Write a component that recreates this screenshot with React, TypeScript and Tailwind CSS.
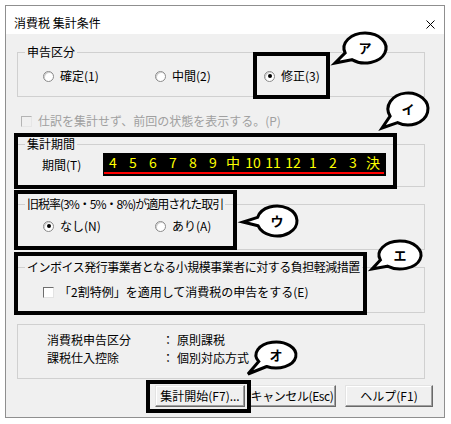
import React from "react";

const months = ["4", "5", "6", "7", "8", "9", "中", "10", "11", "12", "1", "2", "3", "決"];

function Radio({ checked }: { checked?: boolean }) {
  return (
    <span className="flex h-[11px] w-[11px] shrink-0 items-center justify-center rounded-full border border-[#8a8a8a] bg-white shadow-[inset_1px_1px_0_#d0d0d0]">
      {checked && <span className="h-[4px] w-[4px] rounded-full bg-black" />}
    </span>
  );
}

function Check({ disabled }: { disabled?: boolean }) {
  return (
    <span
      className={
        disabled
          ? "block h-[11px] w-[11px] shrink-0 border border-t-[#b4b4b4] border-l-[#b4b4b4] border-r-[#e6e6e6] border-b-[#e6e6e6] bg-[#f0f0f0]"
          : "block h-[11px] w-[11px] shrink-0 border border-t-[#6e6e6e] border-l-[#6e6e6e] border-r-[#e3e3e3] border-b-[#e3e3e3] bg-white"
      }
    />
  );
}

function Option({ label, checked, w }: { label: string; checked?: boolean; w: string }) {
  return (
    <label className={`flex h-[16px] items-center gap-[6px] leading-[16px] ${w}`}>
      <Radio checked={checked} />
      <span>{label}</span>
    </label>
  );
}

function Group({
  title,
  className,
  legendClass,
  children,
}: {
  title: string;
  className?: string;
  legendClass?: string;
  children: React.ReactNode;
}) {
  return (
    <fieldset className={`w-[408px] border border-[#d0d0d0] ${className ?? ""}`}>
      <legend className={`ml-[7px] px-[2px] leading-[16px] ${legendClass ?? ""}`}>{title}</legend>
      {children}
    </fieldset>
  );
}

function Button({ label, w }: { label: string; w: string }) {
  return (
    <button
      className={`flex h-[22px] items-center justify-center whitespace-nowrap border border-t-[#e3e3e3] border-l-[#e3e3e3] border-r-[#696969] border-b-[#696969] bg-[#f0f0f0] leading-[16px] shadow-[inset_-1px_-1px_0_#a0a0a0,inset_1px_1px_0_#ffffff] ${w}`}
    >
      {label}
    </button>
  );
}

function Bubble({
  cx,
  cy,
  rx,
  ry,
  tx,
  ty,
  label,
}: {
  cx: number;
  cy: number;
  rx: number;
  ry: number;
  tx: number;
  ty: number;
  label: string;
}) {
  const t = Math.atan2((ty - cy) / ry, (tx - cx) / rx);
  const d = 0.28;
  const ax = cx + rx * Math.cos(t - d);
  const ay = cy + ry * Math.sin(t - d);
  const bx = cx + rx * Math.cos(t + d);
  const by = cy + ry * Math.sin(t + d);
  const path = `M${ax},${ay} L${tx},${ty} L${bx},${by} A${rx},${ry} 0 1 1 ${ax},${ay} Z`;
  return (
    <g>
      <path d={path} fill="white" stroke="black" strokeWidth={3} strokeLinejoin="miter" />
      <text
        x={cx}
        y={cy + 5}
        textAnchor="middle"
        fontSize={13}
        fontWeight={700}
        fontFamily="'Noto Sans CJK JP', sans-serif"
      >
        {label}
      </text>
    </g>
  );
}

export default function App() {
  return (
    <div className="relative h-[424px] w-[451px] overflow-hidden bg-white font-['Noto_Sans_CJK_JP',sans-serif] text-[12px] text-black">
      <div className="ml-[5px] mt-[5px] flex h-[413px] w-[440px] flex-col border border-[#8f8f8f] bg-[#f0f0f0]">
        {/* title bar */}
        <div className="flex h-[28px] items-start justify-between bg-white pl-[8px] pr-[9px]">
          <span className="pt-[9px] leading-[16px]">消費税 集計条件</span>
          <svg width="9" height="9" viewBox="0 0 9 9" className="mt-[14px]">
            <path d="M0.5 0.5 L8.5 8.5 M8.5 0.5 L0.5 8.5" stroke="#000" strokeWidth="1" />
          </svg>
        </div>

        <div className="flex flex-1 flex-col pl-[11px]">
          <Group className="mt-[10px]" title="申告区分">
            <div className="flex pb-[12px] pl-[25px] pt-[8px]">
              <Option label="確定(1)" w="w-[112px]" />
              <Option label="中間(2)" w="w-[109px]" />
              <Option label="修正(3)" w="w-[90px]" checked />
            </div>
          </Group>

          <label className="mt-[16px] flex h-[16px] items-center gap-[6px] pl-[4px] leading-[16px] text-[#a0a0a0]">
            <Check disabled />
            <span>仕訳を集計せず、前回の状態を表示する。(P)</span>
          </label>

          <Group className="mt-[7px]" title="集計期間">
            <div className="flex items-center pb-[10px] pl-[24px] pt-[1px]">
              <span className="w-[61px] leading-[16px]">期間(T)</span>
              <div className="flex h-[23px] w-[283px] flex-col bg-black">
                <div className="flex h-[19px] items-center">
                  {months.map((m, i) => (
                    <span
                      key={i}
                      className="w-[20px] text-center text-[14px] leading-[19px] text-[#ffff00]"
                    >
                      {m}
                    </span>
                  ))}
                </div>
                <div className="ml-[1px] h-[2px] w-[280px] bg-[#ff0000]" />
              </div>
            </div>
          </Group>

          <Group
            className="mt-[9px]"
            legendClass="tracking-[-1px]"
            title="旧税率(3%・5%・8%)が適用された取引"
          >
            <div className="flex pb-[15px] pl-[25px] pt-[6px]">
              <Option label="なし(N)" w="w-[112px]" checked />
              <Option label="あり(A)" w="w-[90px]" />
            </div>
          </Group>

          <Group
            className="mt-[9px]"
            legendClass="tracking-[-0.5px]"
            title="インボイス発行事業者となる小規模事業者に対する負担軽減措置"
          >
            <label className="mb-[12px] mt-[9px] flex h-[16px] items-center gap-[5px] pl-[25px] leading-[16px]">
              <Check />
              <span>「2割特例」を適用して消費税の申告をする(E)</span>
            </label>
          </Group>

          <div className="mt-[11px] w-[408px] border border-[#d0d0d0] pb-[11px] pl-[29px] pt-[6px]">
            <div className="flex h-[18px] items-center leading-[18px]">
              <span className="w-[115px]">消費税申告区分</span>
              <span className="w-[12px]">：</span>
              <span className="ml-[3px]">原則課税</span>
            </div>
            <div className="flex h-[18px] items-center leading-[18px]">
              <span className="w-[115px]">課税仕入控除</span>
              <span className="w-[12px]">：</span>
              <span className="ml-[3px]">個別対応方式</span>
            </div>
          </div>

          <div className="mt-[6px] flex pl-[138px]">
            <Button label="集計開始(F7)..." w="w-[90px]" />
            <Button label="キャンセル(Esc)" w="ml-[3px] w-[88px] tracking-[-0.4px]" />
            <Button label="ヘルプ(F1)" w="ml-[9px] w-[88px]" />
          </div>
        </div>
      </div>

      {/* annotation frames */}
      <div className="pointer-events-none absolute left-[253px] top-[52px] h-[47px] w-[77px] border-4 border-black" />
      <div className="pointer-events-none absolute left-[14px] top-[133px] h-[56px] w-[383px] border-4 border-black" />
      <div className="pointer-events-none absolute left-[14px] top-[190px] h-[60px] w-[223px] border-4 border-black" />
      <div className="pointer-events-none absolute left-[14px] top-[252px] h-[63px] w-[353px] border-4 border-black" />
      <div className="pointer-events-none absolute left-[146px] top-[380px] h-[33px] w-[105px] border-4 border-black" />

      {/* callout bubbles */}
      <svg className="pointer-events-none absolute left-0 top-0" width="451" height="424">
        <Bubble cx={365} cy={48} rx={21} ry={15} tx={335} ty={63} label="ア" />
        <Bubble cx={408} cy={109} rx={20} ry={16} tx={382} ty={128} label="イ" />
        <Bubble cx={277} cy={221} rx={20} ry={15} tx={243} ty={222} label="ウ" />
        <Bubble cx={400} cy={255} rx={21} ry={14} tx={372} ty={269} label="エ" />
        <Bubble cx={276} cy={355} rx={20} ry={13} tx={248} ty={374} label="オ" />
      </svg>
    </div>
  );
}
